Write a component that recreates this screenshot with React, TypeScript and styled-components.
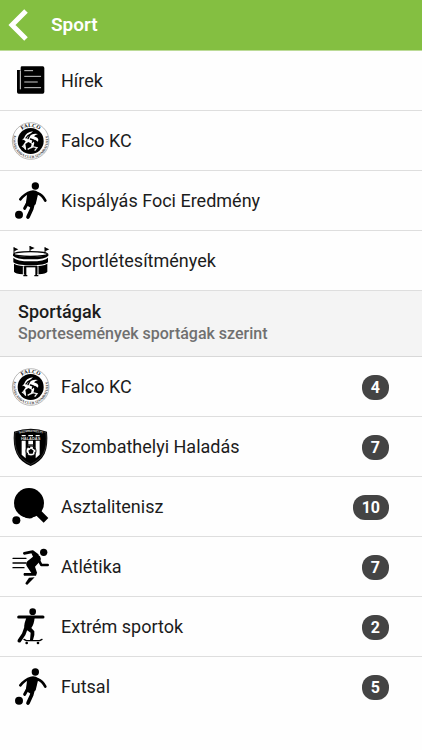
import React from "react";
import styled, { createGlobalStyle } from "styled-components";

const GlobalStyle = createGlobalStyle`
  * { box-sizing: border-box; }
  body {
    margin: 0;
    background: #fefefe;
    color: #1c1c1c;
    font-family: Roboto, "Liberation Sans", sans-serif;
  }
`;

const Header = styled.header`
  display: flex;
  align-items: center;
  height: 51px;
  background: #84bf41;
  border-bottom: 1px solid #bcdb97;
`;

const BackButton = styled.button`
  display: flex;
  width: 51px;
  height: 50px;
  padding: 0;
  border: 0;
  background: none;
  cursor: pointer;
`;

const Title = styled.h1`
  margin: 0;
  color: #fff;
  font-size: 19px;
  line-height: 24px;
  font-weight: 600;
`;

const List = styled.ul`
  margin: 0;
  padding: 0;
  list-style: none;
`;

const Row = styled.li`
  border-bottom: 1px solid #dedede;

  &[data-last="true"] {
    border-bottom-color: transparent;
  }
`;

const RowLink = styled.a`
  display: flex;
  align-items: center;
  height: 59px;
  padding-right: 33px;
  color: inherit;
  text-decoration: none;
`;

const IconBox = styled.svg`
  flex: none;
  width: 61px;
  height: 59px;
`;

const Label = styled.span`
  flex: 1;
  font-size: 18px;
  line-height: 24px;
`;

const Badge = styled.span`
  min-width: 27px;
  margin-top: 2px;
  padding: 0 9px;
  border-radius: 12px;
  background: #444;
  color: #fff;
  font-size: 16px;
  line-height: 25px;
  font-weight: 700;
  text-align: center;
`;

const Section = styled.section`
  padding: 9px 18px 12px;
  background: #f4f4f4;
  border-bottom: 1px solid #d8d8d8;
`;

const SectionTitle = styled.h2`
  margin: 0;
  font-size: 18px;
  line-height: 24px;
  font-weight: 500;
`;

const SectionNote = styled.p`
  margin: 0;
  color: #707070;
  font-size: 16px;
  line-height: 20px;
  font-weight: 500;
`;

type IconName = "news" | "falco" | "football" | "stadium" | "haladas" | "pingpong" | "athletics" | "skate";

const Icon = ({ name, id }: { name: IconName; id: string }) => {
  const stroke = { fill: "none", stroke: "#000", strokeLinecap: "round" as const, strokeLinejoin: "round" as const };
  switch (name) {
    case "news":
      return (
        <IconBox viewBox="0 3 183 177" aria-hidden="true">
          <path d="M66 49h62q5 0 5 5v72q0 5-5 5H56q-5 0-5-5V60h11V53q0-4 4-4z" />
          <path d="M61 61v57" stroke="#ddd" strokeWidth="3" />
          <path d="M74 62h24M74 79h48M74 96h38M74 113h48" stroke="#ccc" strokeWidth="3" fill="none" strokeLinecap="round" />
        </IconBox>
      );
    case "falco":
      return (
        <IconBox viewBox="0 3 183 177" aria-hidden="true">
          <defs>
            <path id={`${id}-top`} d="M50 93a42 42 0 0 1 84 0" />
            <path id={`${id}-bottom`} d="M51 58a53 53 0 1 0 82 0" />
          </defs>
          <circle cx="92" cy="93" r="55" fill="none" stroke="#999" strokeWidth="2" />
          <circle cx="92" cy="93" r="39" />
          <text fontSize="16" fontWeight="700" fontFamily="Liberation Serif, serif" textAnchor="middle" fill="#000">
            <textPath href={`#${id}-top`} startOffset="50%">FALCO</textPath>
          </text>
          <text fontSize="11" fontWeight="700" fontFamily="Liberation Serif, serif" textAnchor="middle" fill="#444">
            <textPath href={`#${id}-bottom`} startOffset="50%">KOSÁRLABDA CLUB SZOMBATHELY</textPath>
          </text>
          <path d="M72 84q6-18 27-20-9 6-8 12 8-7 23-4-8 2-12 7l10 4q5 5 2 12l-9-6-9 2 7 7-3 13-8 5 3-15-10-5-9 6 3 19-5-3-5-12 8-12-6-5-5 2z" fill="#fff" />
          <path d="M78 84q4-8 14-12l-5 8-3 6M91 87l9 3-3 7M81 106v18" {...stroke} strokeWidth="4" />
          <path d="M66 108l11 7M83 118l14-8 14 3-7 9" fill="none" stroke="#eee" strokeWidth="4" />
        </IconBox>
      );
    case "football":
      return (
        <IconBox viewBox="0 3 183 177" aria-hidden="true">
          <circle cx="106" cy="48" r="11" />
          <circle cx="57" cy="134" r="12" />
          <path d="M61 88Q76 70 92 66q12-3 21 4 15 6 23 22" {...stroke} strokeWidth="8" />
          <path d="M82 69q16-8 33 0l-8 34-15 10-15-9z" />
          <path d="M85 95l-11 20" {...stroke} strokeWidth="9" />
          <path d="M101 94l-6 23-11 24" {...stroke} strokeWidth="11" />
        </IconBox>
      );
    case "stadium":
      return (
        <IconBox viewBox="0 3 183 177" aria-hidden="true">
          <path d="M41 52l14 6-12 6zM89 48l15 6-13 6zM134 52l14 6-12 6z" />
          <path d="M42 52v19M90 48v17M135 52v19" stroke="#000" strokeWidth="3" />
          <ellipse cx="92" cy="72" rx="50" ry="7" fill="none" stroke="#000" strokeWidth="4" />
          <path d="M39 71q10 10 53 10t53-10v6q-7 11-53 11T39 77zM40 83q9 11 52 11t52-11v14q-8 9-52 9t-52-9zM42 101q12 8 50 8t50-8v24q-4 6-26 8H68q-22-2-26-8z" />
          <path d="M73 107h38v31H73z" />
          <path d="M79 112h27v27H79z" fill="#fff" />
          <path d="M70 109v25M114 109v25" stroke="#fff" strokeWidth="3" />
          <path d="M70 137h12M103 137h12" stroke="#000" strokeWidth="4" />
        </IconBox>
      );
    case "haladas":
      return (
        <IconBox viewBox="0 0 183 177" aria-hidden="true">
          <defs>
            <path id={`${id}-arch`} d="M46 53q46-16 93 0" />
          </defs>
          <path d="M42 44q51-17 99 0 4 41-7 66-12 24-42 37-31-13-42-37-12-25-8-66z" />
          <path d="M45 47q47-16 93 0 4 38-7 61-11 21-39 34-28-13-39-34-11-24-8-61z" fill="none" stroke="#888" strokeWidth="1" />
          <path d="M65 71h12v53l-12-11zM85 71h14v17H85zM107 71h12v42l-12 11z" fill="#fff" />
          <text fontSize="9" fontWeight="700" fontFamily="Liberation Sans, sans-serif" textAnchor="middle" fill="#ddd">
            <textPath href={`#${id}-arch`} startOffset="50%">SZOMBATHELYI</textPath>
          </text>
          <path d="M65 54h12v4H65zM85 54h14v4H85zM107 54h12v4h-12z" fill="#fff" />
          <text x="92" y="69" fontSize="12" fontWeight="700" fontFamily="Liberation Sans, sans-serif" textAnchor="middle" fill="#ddd">HALADÁS</text>
          <path d="M81 84h20" stroke="#111" strokeWidth="4" />
          <circle cx="93" cy="102" r="15" fill="#fff" stroke="#111" strokeWidth="3" />
          <path d="M93 95l8 6-3 9H88l-3-9zM83 91l5-4 4 2-3 5zM100 88l6 6-1 5-7-5zM79 105l5 4-1 5zM103 106l4-1-2 9z" />
        </IconBox>
      );
    case "pingpong":
      return (
        <IconBox viewBox="0 0 183 177" aria-hidden="true">
          <circle cx="49" cy="130" r="12" />
          <circle cx="87" cy="78" r="45" />
          <path d="M65 116q20 12 32 7 0-9 7-12l27 26 14-14-27-27q3-7 11-9l-5-24z" />
        </IconBox>
      );
    case "athletics":
      return (
        <IconBox viewBox="0 0 183 177" aria-hidden="true">
          <circle cx="131" cy="46" r="11" />
          <path d="M39 64h39M39 78h39M39 92h33" {...stroke} strokeWidth="4" />
          <path d="M73 49l25-5 14 10M115 67l9 17h19" {...stroke} strokeWidth="8" />
          <path d="M94 48q14-1 26 10 5 7 0 15l-15 16 6 18-3 9H72q-3-4 0-8h22l-12-18q-7-8 0-17l17-14z" />
          <path d="M87 122l17-1-22 22q-4 1-6-4z" />
        </IconBox>
      );
    case "skate":
      return (
        <IconBox viewBox="0 0 183 177" aria-hidden="true">
          <circle cx="98" cy="44" r="10" />
          <path d="M56 60h73" {...stroke} strokeWidth="9" />
          <path d="M79 62h25q-2 20-10 31l9 10q2 10-4 26h-9l2-22-16-11q-6-8-2-18z" />
          <path d="M79 90l-8 22-13 19" {...stroke} strokeWidth="11" />
          <path d="M72 127l7 4h40l7-4" {...stroke} strokeWidth="4" />
          <circle cx="80" cy="138" r="4" />
          <circle cx="114" cy="138" r="4" />
        </IconBox>
      );
  }
};

type Item = { label: string; icon: IconName; count?: number };

const links: Item[] = [
  { label: "Hírek", icon: "news" },
  { label: "Falco KC", icon: "falco" },
  { label: "Kispályás Foci Eredmény", icon: "football" },
  { label: "Sportlétesítmények", icon: "stadium" },
];

const sports: Item[] = [
  { label: "Falco KC", icon: "falco", count: 4 },
  { label: "Szombathelyi Haladás", icon: "haladas", count: 7 },
  { label: "Asztalitenisz", icon: "pingpong", count: 10 },
  { label: "Atlétika", icon: "athletics", count: 7 },
  { label: "Extrém sportok", icon: "skate", count: 2 },
  { label: "Futsal", icon: "football", count: 5 },
];

const ItemList = ({ items, id }: { items: Item[]; id: string }) => (
  <List>
    {items.map((item, index) => (
      <Row key={item.label} data-last={id === "sports" && index === items.length - 1}>
        <RowLink href={`#${id}-${index}`}>
          <Icon name={item.icon} id={`${id}-icon-${index}`} />
          <Label>{item.label}</Label>
          {item.count !== undefined && <Badge>{item.count}</Badge>}
        </RowLink>
      </Row>
    ))}
  </List>
);

export default function App() {
  return (
    <>
      <GlobalStyle />
      <Header>
        <BackButton aria-label="Vissza">
          <svg width="51" height="50" viewBox="0 0 51 50" aria-hidden="true">
            <path d="M26 11L12 25l14 14" fill="none" stroke="#fff" strokeWidth="5" />
          </svg>
        </BackButton>
        <Title>Sport</Title>
      </Header>
      <main>
        <ItemList items={links} id="links" />
        <Section>
          <SectionTitle>Sportágak</SectionTitle>
          <SectionNote>Sportesemények sportágak szerint</SectionNote>
        </Section>
        <ItemList items={sports} id="sports" />
      </main>
    </>
  );
}
